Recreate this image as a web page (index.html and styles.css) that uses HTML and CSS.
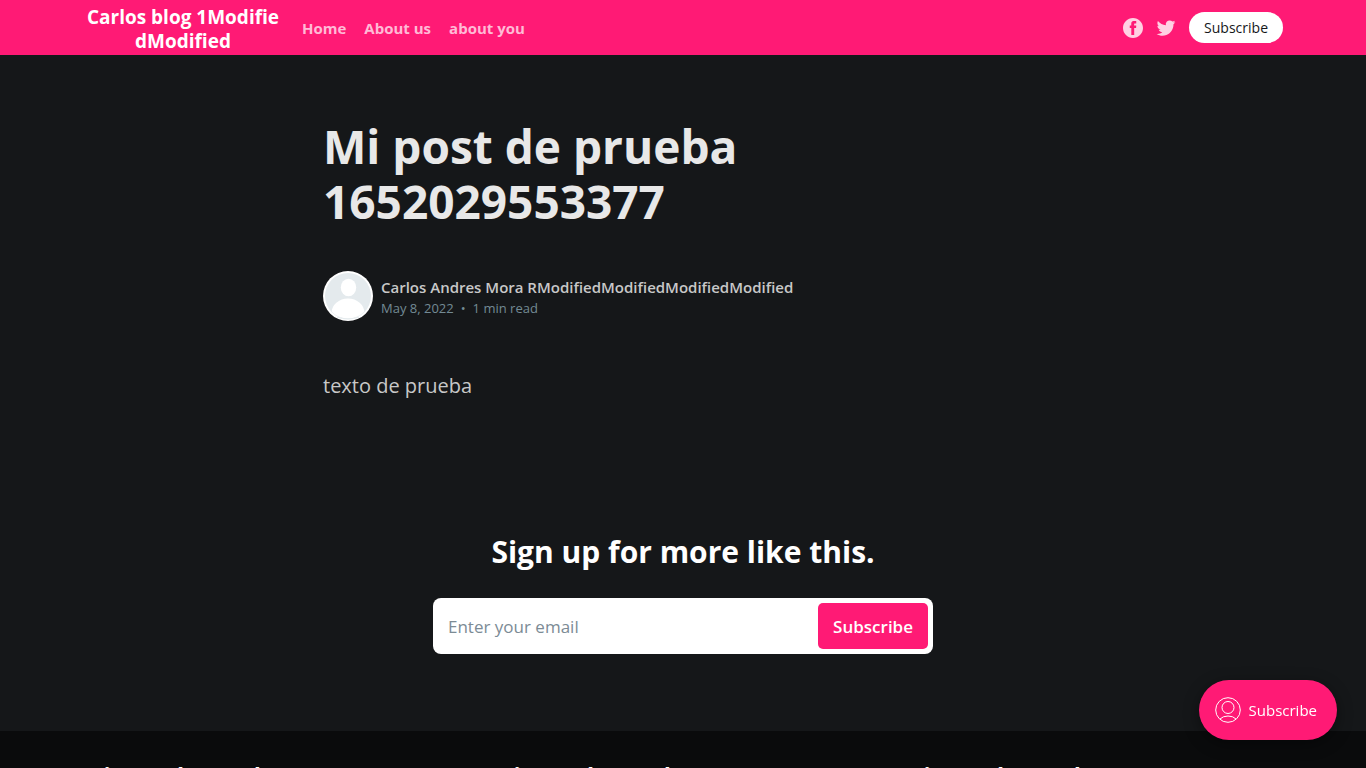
FILE: index.html
```html
<!DOCTYPE html>
<html lang="es">
<head>
<meta charset="utf-8">
<meta name="viewport" content="width=device-width, initial-scale=1">
<title>Mi post de prueba 1652029553377</title>
<link rel="stylesheet" href="styles.css">
</head>
<body>
<header class="site-header">
  <div class="header-inner">
    <a class="brand" href="#">Carlos blog 1Modifie<wbr>dModified</a>
    <nav class="nav">
      <a href="#">Home</a>
      <a href="#">About us</a>
      <a href="#">about you</a>
    </nav>
    <div class="actions">
      <a class="social" href="#" aria-label="Facebook">
        <svg width="20" height="20" viewBox="0 0 32 32" fill="currentColor"><path d="M16 0c8.837 0 16 7.163 16 16s-7.163 16-16 16S0 24.837 0 16 7.163 0 16 0zm5.204 4.911h-3.546c-2.103 0-4.443.885-4.443 3.934.01 1.062 0 2.08 0 3.225h-2.433v3.872h2.509v11.147h4.61v-11.22h3.042l.275-3.81h-3.397s.007-1.695 0-2.187c0-1.205 1.253-1.136 1.329-1.136h2.054V4.911z"/></svg>
      </a>
      <a class="social" href="#" aria-label="Twitter">
        <svg width="20" height="20" viewBox="1 1 30 30" fill="currentColor"><path d="M30.063 7.313c-.813 1.125-1.75 2.125-2.875 2.938v.75c0 1.563-.188 3.125-.688 4.625a15.088 15.088 0 0 1-2.063 4.438c-.875 1.438-2 2.688-3.25 3.813a15.015 15.015 0 0 1-4.625 2.563c-1.813.688-3.75 1-5.75 1-3.25 0-6.188-.875-8.875-2.625.438.063.875.125 1.375.125 2.688 0 5.063-.875 7.188-2.5-1.25 0-2.375-.375-3.375-1.125s-1.688-1.688-2.063-2.875c.438.063.813.125 1.125.125.5 0 1-.063 1.5-.25-1.313-.25-2.438-.938-3.313-1.938a5.673 5.673 0 0 1-1.313-3.688v-.063c.813.438 1.688.688 2.625.688a5.228 5.228 0 0 1-1.875-2c-.5-.875-.688-1.813-.688-2.75 0-1.063.25-2.063.75-2.938 1.438 1.75 3.188 3.188 5.25 4.25s4.313 1.688 6.688 1.813a5.579 5.579 0 0 1 1.5-5.438c1.125-1.125 2.5-1.688 4.125-1.688s3.063.625 4.188 1.813a11.48 11.48 0 0 0 3.688-1.375c-.438 1.375-1.313 2.438-2.563 3.188 1.125-.125 2.188-.438 3.313-.875z"/></svg>
      </a>
      <button class="header-subscribe" type="button">Subscribe</button>
    </div>
  </div>
</header>
<main class="article">
  <h1 class="title">Mi post de prueba 1652029553377</h1>
  <div class="byline">
    <svg class="avatar" width="50" height="50" viewBox="0 0 50 50" aria-hidden="true">
      <clipPath id="disc"><circle cx="25" cy="25" r="22.5"/></clipPath>
      <circle cx="25" cy="25" r="25" fill="#fff"/>
      <circle cx="25" cy="25" r="23" fill="#e4eaed"/>
      <g clip-path="url(#disc)" fill="#fff"><ellipse cx="25.500" cy="16.500" rx="7.700" ry="8.800"/><ellipse cx="25" cy="42" rx="16.500" ry="14.500"/></g>
      <path d="M14 46q11 4 22 0" fill="none" stroke="#e4eaed"/>
    </svg>
    <div class="byline-text">
      <a class="author" href="#">Carlos Andres Mora RModifiedModifiedModifiedModified</a>
      <div class="meta"><time datetime="2022-05-08">May 8, 2022</time><span class="dot">•</span><span>1 min read</span></div>
    </div>
  </div>
  <p class="content">texto de prueba</p>
</main>
<section class="signup">
  <h2 class="signup-title">Sign up for more like this.</h2>
  <form class="signup-form">
    <input class="email" type="email" placeholder="Enter your email" aria-label="Email">
    <button class="form-subscribe" type="button">Subscribe</button>
  </form>
</section>
<aside class="more">
  <div class="more-inner">
    <h2 class="card-title">Mi post de prueba</h2>
    <h2 class="card-title">Mi post de prueba</h2>
    <h2 class="card-title">Mi post de prueba</h2>
  </div>
</aside>
<button class="portal" type="button">
  <svg width="26" height="26" viewBox="0 0 26 26" fill="none" stroke="currentColor" stroke-width="1"><circle cx="13" cy="13" r="12.300"/><circle cx="13" cy="10.500" r="6"/><path d="M5 22q3-3 8-3t8 3"/></svg>
  Subscribe
</button>
</body>
</html>
```
FILE: styles.css
```css
* { box-sizing: border-box; }
body {
  margin: 0;
  background: #151719;
  color: #fff;
  font-family: "Segoe UI", "Open Sans", "Noto Sans", sans-serif;
}
a { color: inherit; text-decoration: none; }
button, input { font-family: inherit; border: 0; }
button { cursor: pointer; }

.site-header { background: #ff1a75; padding: 0 40px; }
.header-inner {
  display: flex;
  align-items: center;
  max-width: 1200px;
  min-height: 55px;
  margin: 0 auto;
}
.brand {
  width: 200px;
  padding-top: 2px;
  font-size: 19px;
  font-weight: 700;
  line-height: 24px;
  text-align: center;
}
.nav {
  display: flex;
  flex: 1;
  gap: 18px;
  margin-left: 19px;
  font-size: 15px;
  font-weight: 700;
  color: #ffbad6;
}
.actions { display: flex; align-items: center; gap: 13px; }
.social { display: flex; color: #ffd1e3; }
.header-subscribe {
  height: 31px;
  padding: 0 15px;
  border-radius: 16px;
  background: #fff;
  color: #15171a;
  font-size: 14px;
}

.article { max-width: 720px; margin: 0 auto; padding-top: 64px; }
.title {
  max-width: 520px;
  margin: 0;
  color: #e8e8e8;
  font-size: 46px;
  font-weight: 700;
  line-height: 55px;
}
.byline { display: flex; align-items: center; gap: 8px; margin-top: 42px; }
.byline-text { padding-top: 2px; }
.author {
  display: block;
  color: #c8c8c8;
  font-size: 15px;
  font-weight: 600;
  line-height: 22px;
}
.meta {
  display: flex;
  gap: 7px;
  color: #738a94;
  font-size: 13px;
  line-height: 20px;
}
.content {
  margin: 49px 0 0;
  color: #c8c8c8;
  font-size: 20px;
  line-height: 32px;
}

.signup { padding: 130px 20px 77px; text-align: center; }
.signup-title { margin: 0; font-size: 30px; font-weight: 700; line-height: 40px; }
.signup-form {
  display: flex;
  max-width: 500px;
  margin: 26px auto 0;
  padding: 5px;
  border-radius: 8px;
  background: #fff;
}
.email {
  flex: 1;
  min-width: 0;
  padding: 0 10px;
  background: transparent;
  color: #15171a;
  font-size: 17px;
  outline: 0;
}
.email::placeholder { color: #7c8b95; }
.form-subscribe {
  height: 46px;
  padding: 0 15px;
  border-radius: 5px;
  background: #ff1a75;
  color: #fff;
  font-size: 17px;
  font-weight: 600;
}

.more { padding: 28px 40px; background: #0a0b0c; }
.more-inner {
  display: grid;
  grid-template-columns: repeat(3, 1fr);
  gap: 30px;
  max-width: 1200px;
  margin: 0 auto;
}
.card-title { margin: 0; font-size: 22px; font-weight: 700; line-height: 30px; }

.portal {
  position: fixed;
  right: 29px;
  bottom: 28px;
  display: flex;
  align-items: center;
  gap: 8px;
  height: 60px;
  padding: 0 20px 0 16px;
  border-radius: 30px;
  background: #ff1a75;
  color: #fff;
  font-size: 15px;
  box-shadow: 0 4px 16px rgb(0 0 0 / 40%);
}
```
